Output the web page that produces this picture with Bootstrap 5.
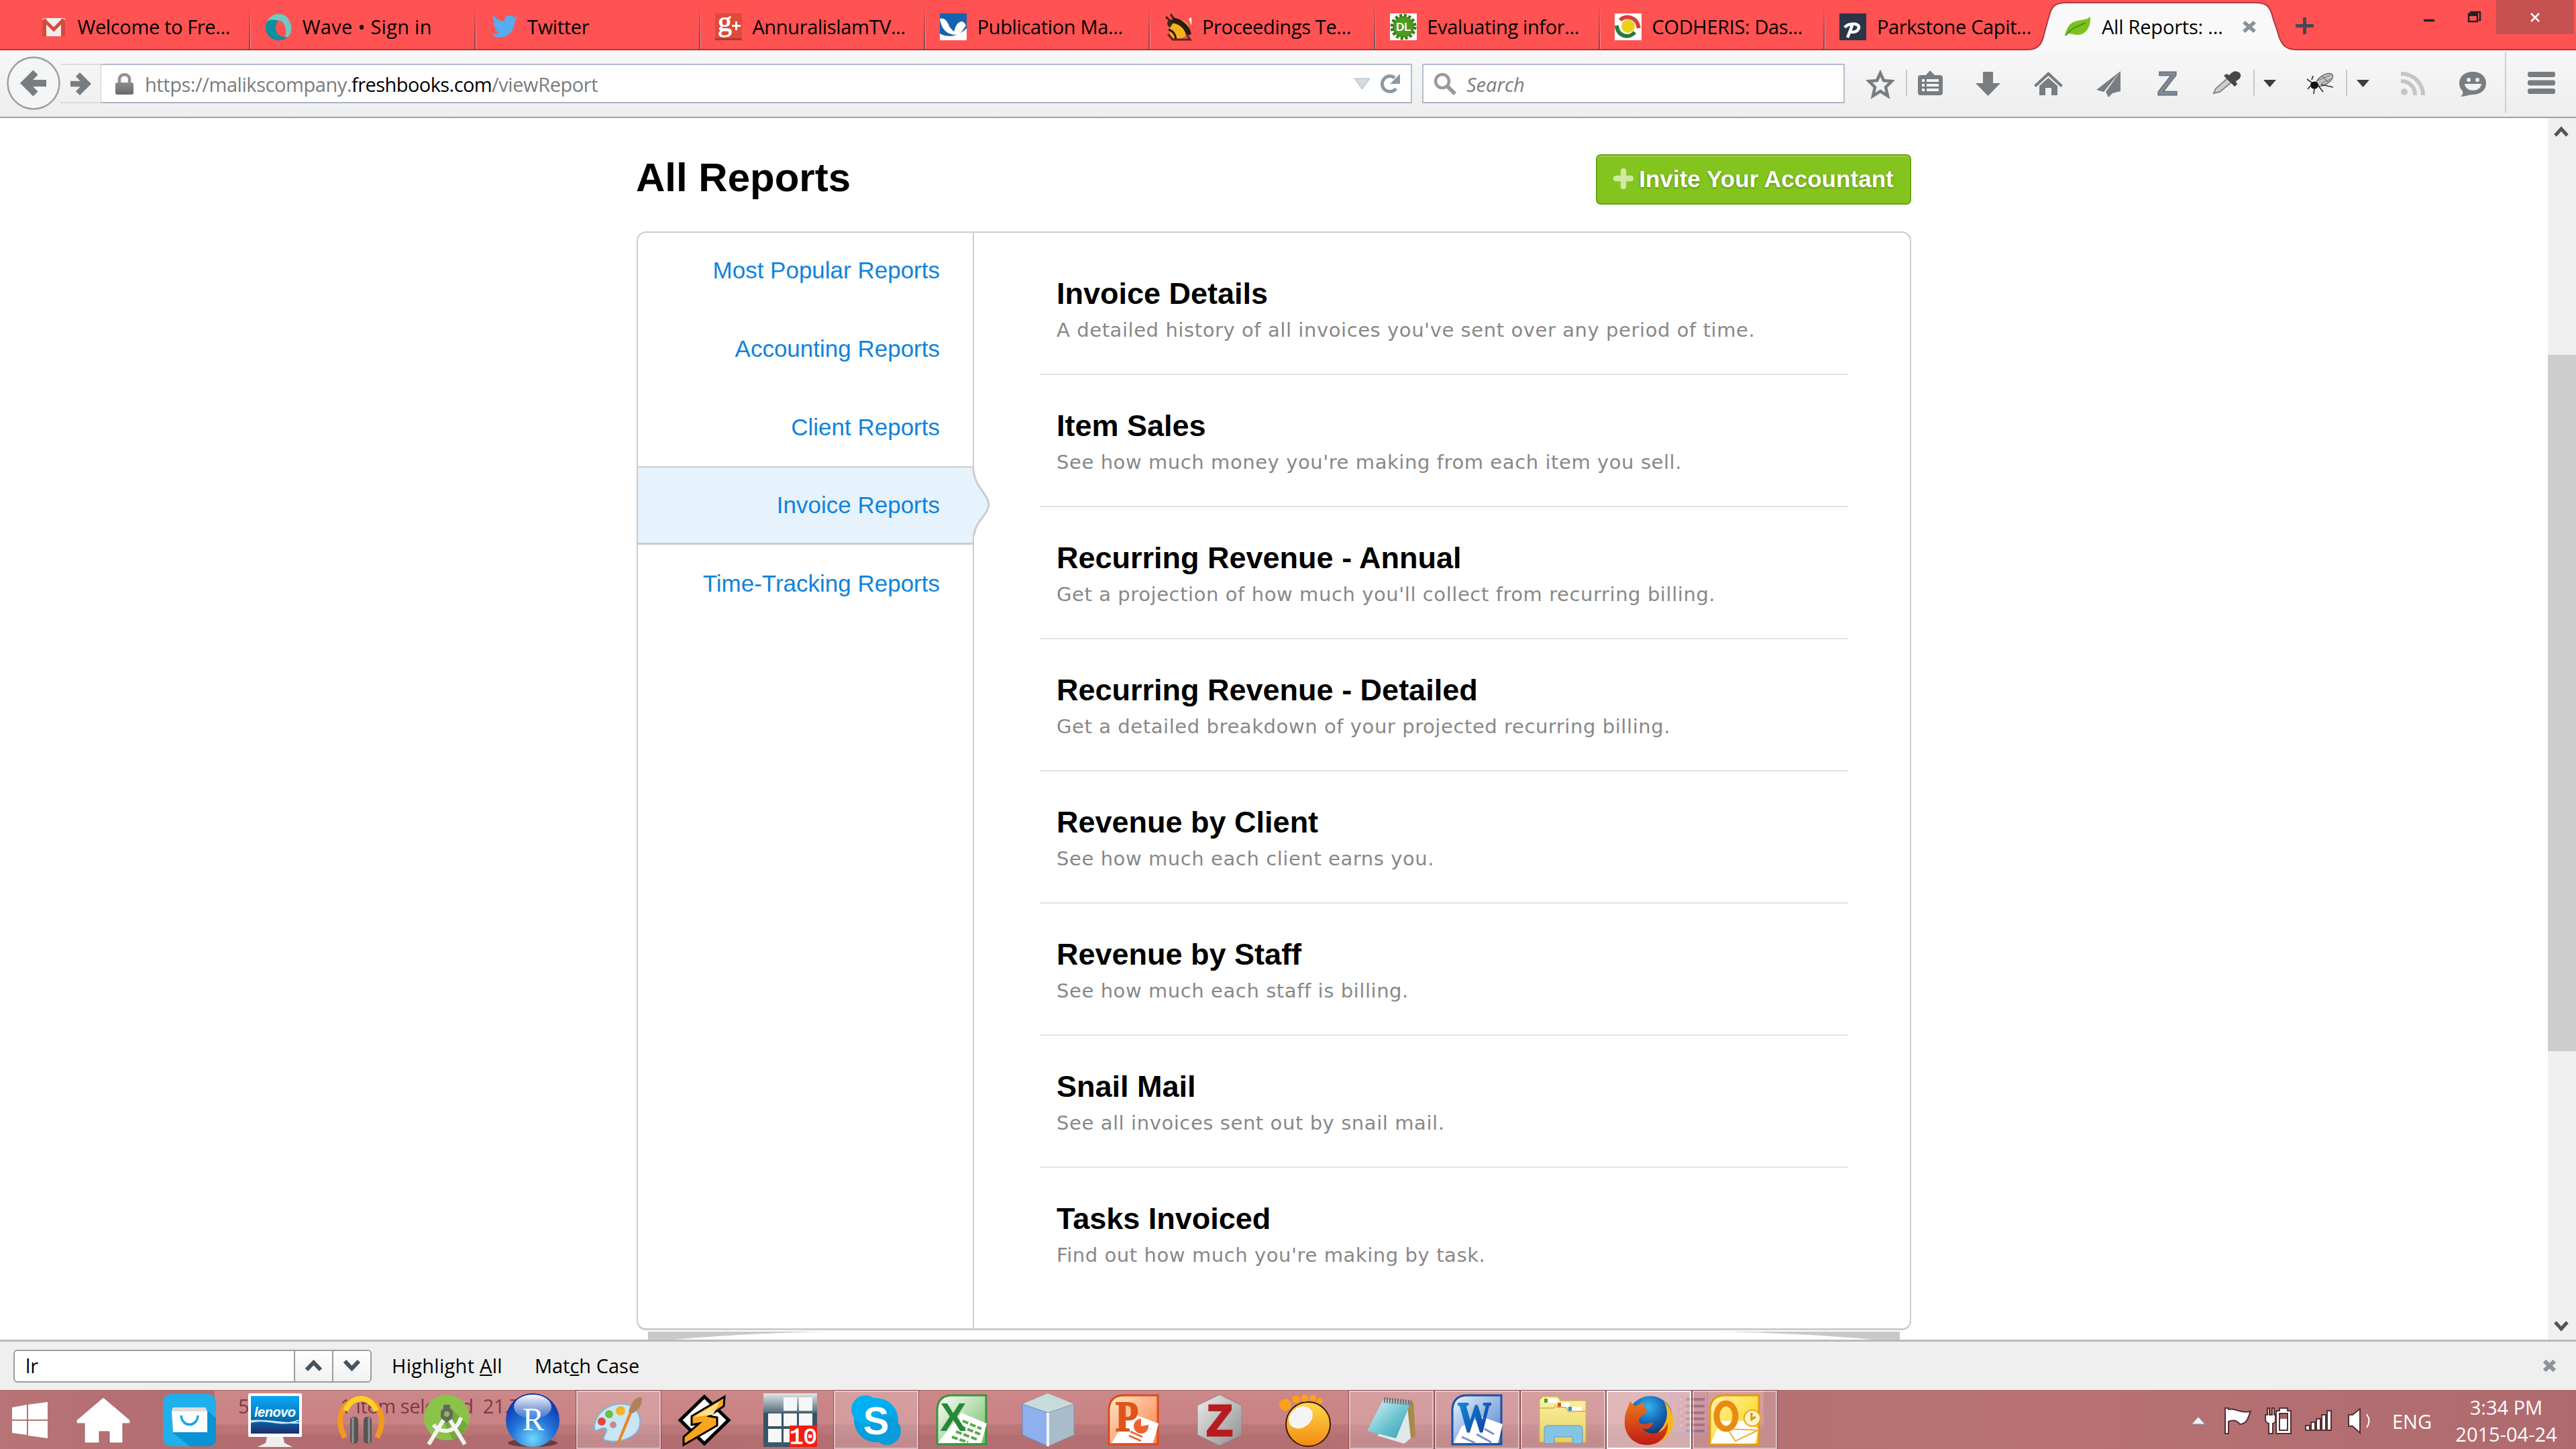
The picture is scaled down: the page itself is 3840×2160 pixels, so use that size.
<!DOCTYPE html>
<html lang="en">
<head>
<meta charset="utf-8">
<title>All Reports: FreshBooks</title>
<link href="https://cdn.jsdelivr.net/npm/bootstrap@5.3.0/dist/css/bootstrap.min.css" rel="stylesheet">
<style>
html,body{width:3840px;height:2160px;overflow:hidden;background:#fff}
body{font-family:"Open Sans","Noto Sans",sans-serif;font-size:29px;line-height:40px;color:#000}
svg{display:block;flex:none;overflow:visible}
svg text{font-family:"Liberation Sans",Arial,sans-serif}
svg text.serif{font-family:"Liberation Serif","Times New Roman",serif}
svg text.mono{font-family:"Liberation Mono",monospace}
/* tab strip */
.tabstrip{height:75px;background:#ff5252;border-bottom:2px solid #a8393e;padding-left:38px;flex:none;letter-spacing:-.36px}
.btab{width:335.3px;height:73px;padding:7px 0 0 22px;gap:15.5px;flex:none;white-space:nowrap;position:relative}
.btab::after{content:"";position:absolute;right:-1px;top:6px;width:3px;height:67px;background:linear-gradient(90deg,#6f4a5a 60%,#ff9a9a 60%);-webkit-mask-image:linear-gradient(transparent,#000);mask-image:linear-gradient(transparent,#000)}
.btab.lasttab::after,.btab.curtab::after{display:none}
.btab.lasttab{width:303px}
.btab.curtab{width:399px;height:77px;padding:7px 0 4px 54px;letter-spacing:-.2px}
.curtab .tabshape{position:absolute;left:0;top:0}
.curtab>*:not(.tabshape){position:relative}
.ls-wide{letter-spacing:.28px}
.winbtn-x{width:116px;height:51px;background:#c75050;margin-right:3px}
/* toolbar */
.toolbar{height:101px;background:linear-gradient(#f7f7f7,#eeeeee);border-bottom:2px solid #a0a0a0;flex:none}
.fwd{width:61px;height:59px;border:2px solid #dcdcdc;border-right:1px solid #c4ccd4;border-left:0;margin-left:90px}
.backc{left:10px;top:9px}
.field{height:59px;background:#fff;border:2px solid #b4bfca;border-bottom-color:#aab6c2}
.field span{margin-top:2px}
.urlf{width:1954px;border-left:0;letter-spacing:-.43px}
.searchf{width:630px;margin-left:15px}
.muted{color:#7b7b7b}
.host{letter-spacing:-.57px}
/* page */
.viewport-area{height:1821px;flex:none;overflow:hidden}
.scrollcol{width:42px;background:#f0f0f0}
.thumb{height:1038px;background:#cdcdcd}
.report-wrap{width:1900px;margin-left:949px;padding-top:54px;font-family:"Liberation Sans",Arial,sans-serif}
.pagehead{height:75px;margin-bottom:40px}
.pagehead h1{font-size:60px;line-height:70px;font-weight:700;margin:0 0 5px -1px}
.invite{width:470px;height:75px;padding:0 0 1px;background:#84c41f;border:2px solid #69a30f;border-radius:7px;color:#fff;font-weight:700;font-size:35px;box-shadow:inset 0 2px 0 #9bd03f;text-shadow:0 1px 3px #4e7d06;line-height:40px;gap:8px;letter-spacing:.05px}
.panelbox{height:1638px;border:2px solid #ccc;border-bottom-width:3px;border-radius:14px;position:relative;z-index:1;background:#fff}
.side{width:501px;border-right:2px solid #ccc;padding:0}
.side a{height:116.5px;font-size:35px;color:#1183dc;text-decoration:none;padding:0 49px 1px 0;white-space:nowrap;position:relative}
.side a.first{height:115.4px;padding-bottom:4px}
.side a.cur{background:#e6f2fc;border-top:2px solid #ccc;border-bottom:3px solid #ccc;padding-bottom:0}
.side a.cur svg{position:absolute;left:499px;top:3px}
.replist{width:1205px;margin-left:98px;padding-top:15px}
.rep{height:197px;border-bottom:2px solid #e3e3e3;padding:49px 0 0 25px;white-space:nowrap}
.rep:last-child{border:0}
.rep h2{font-size:45px;line-height:54px;font-weight:700;margin:0 0 7px}
.rep p{font-family:"DejaVu Sans",Verdana,sans-serif;font-size:29px;line-height:40px;color:#888;margin:0;letter-spacing:.58px}
/* find bar */
.findbar{height:75px;background:#efefef;border-top:3px solid #b9bab9;flex:none;padding-left:20px}
.findgrp{width:534px;height:49px;border:2px solid #9c9c9c;border-radius:6px;background:#fff}
.findgrp .fb{width:57px;border-left:2px solid #9c9c9c;background:linear-gradient(#fff,#f1f1f1)}
.findinput{width:417px;padding-left:16px}
.findopts{gap:48px;margin-left:30px}
/* taskbar */
.taskbar{height:88px;position:relative;flex:none;border-top:1px solid #a56a6c;
background:linear-gradient(90deg,#b77476,#b26c70 8%,#b47073 60%,#b87274 80%,#ae6a6e)}
.glass{position:absolute;left:320px;top:0;width:2309px;height:66px;background:linear-gradient(#cc8788 0,#c98284 50px,#bc7779 51px,#b97376 100%)}
.ghost{position:absolute;left:355px;top:7px;color:#7d3a49;line-height:32px;white-space:pre;gap:136px;letter-spacing:-.4px}
.slot{width:128px;height:87px;flex:none;position:relative}
.slot.open::before{content:"";position:absolute;inset:0 1px 0 1px;border:2px solid rgba(255,255,255,.42);outline:1px solid rgba(110,50,60,.6);background:rgba(255,255,255,.2)}
.slot.now::before{border-color:#fff;background:rgba(255,255,255,.42)}
.slot svg{position:relative}
.ghostlist{position:absolute;left:2490px;top:0;width:56px;height:63px;border:1px solid #8a7aa5;background:rgba(190,120,135,.5)}
.tray{color:#fff}
.clock{width:180px;line-height:40.5px;text-align:center;margin:3px 14px 0 21px}
</style>
<script src="https://cdn.jsdelivr.net/npm/bootstrap@5.3.0/dist/js/bootstrap.bundle.min.js"></script>
</head>
<body class="d-flex flex-column">
<svg width="0" height="0" class="position-absolute">
<defs>
<linearGradient id="gMon" x2="0" y2="1"><stop offset="0" stop-color="#0aa5f5"/><stop offset=".45" stop-color="#0284c9"/><stop offset="1" stop-color="#1c2d6b"/></linearGradient>
<linearGradient id="gGray" x2="0" y2="1"><stop offset="0" stop-color="#8c8c8c"/><stop offset="1" stop-color="#6a6a6a"/></linearGradient>
<radialGradient id="gR" cx=".5" cy=".85" r=".8"><stop offset="0" stop-color="#6fd8fb"/><stop offset=".5" stop-color="#2272d8"/><stop offset="1" stop-color="#0a2fa8"/></radialGradient>
<linearGradient id="gShine" x2="0" y2="1"><stop offset="0" stop-color="#fff"/><stop offset="1" stop-color="#fff" stop-opacity=".1"/></linearGradient>
<linearGradient id="gOr" x2="0" y2="1"><stop offset="0" stop-color="#ffd94a"/><stop offset="1" stop-color="#f28a12"/></linearGradient>
<linearGradient id="gTile" x2="0" y2="1"><stop offset="0" stop-color="#dfe5e8"/><stop offset=".35" stop-color="#5a7180"/><stop offset=".37" stop-color="#345264"/><stop offset="1" stop-color="#395a6c"/></linearGradient>
<linearGradient id="gSky" x2="0" y2="1"><stop offset="0" stop-color="#00b2f2"/><stop offset="1" stop-color="#0799d8"/></linearGradient>
<linearGradient id="gX" x2="1" y2="1"><stop offset="0" stop-color="#fff"/><stop offset="1" stop-color="#6dbb5d"/></linearGradient>
<linearGradient id="gP" x2="1" y2="1"><stop offset="0" stop-color="#fde9c8"/><stop offset="1" stop-color="#ff7a45"/></linearGradient>
<linearGradient id="gW" x2="1" y2="1"><stop offset="0" stop-color="#e8f3fc"/><stop offset="1" stop-color="#4a80cc"/></linearGradient>
<linearGradient id="gWt" x2="1" y2="1"><stop offset="0" stop-color="#1290e0"/><stop offset="1" stop-color="#12359c"/></linearGradient>
<linearGradient id="gO" x2="1" y2="1"><stop offset="0" stop-color="#fff3a8"/><stop offset="1" stop-color="#ffd000"/></linearGradient>
<linearGradient id="gFo" x2="0" y2="1"><stop offset="0" stop-color="#fbf3a8"/><stop offset="1" stop-color="#e9cf5c"/></linearGradient>
<radialGradient id="gGlobe" cx=".45" cy=".25" r=".8"><stop offset="0" stop-color="#35b5ee"/><stop offset=".5" stop-color="#145fae"/><stop offset="1" stop-color="#141a4c"/></radialGradient>
<linearGradient id="gFox" x2="0" y2="1"><stop offset="0" stop-color="#ee7a1c"/><stop offset="1" stop-color="#c01a16"/></linearGradient>
<linearGradient id="gNote" x2="1" y2="1"><stop offset="0" stop-color="#e6f8fa"/><stop offset=".6" stop-color="#63c0cc"/><stop offset="1" stop-color="#3a98a8"/></linearGradient>
<linearGradient id="gHex" x2="1" y2="1"><stop offset="0" stop-color="#eee"/><stop offset="1" stop-color="#8d8d8d"/></linearGradient>
</defs></svg>

<div class="tabstrip d-flex">
 <div class="btab d-flex align-items-center"><svg width="40" height="40" viewBox="0 0 40 40"><rect x="3" y="7" width="34" height="27" rx="3" fill="#eee"/><path d="M3 34V10L9 8V34ZM37 34V10L31 8V34Z" fill="#d64a3c"/><path d="M5 9 20 24 35 9" fill="none" stroke="#d64a3c" stroke-width="5"/></svg><span>Welcome to Fre...</span></div>
 <div class="btab d-flex align-items-center"><svg width="40" height="40" viewBox="0 0 40 40"><path d="M3 12C10-2 30-4 37 12C43 26 36 37 30 36C34 24 29 10 19 10C10 10 6 16 3 12Z" fill="#6fc9c5"/><path d="M2 14C-3 28 8 42 24 40C32 39 34 35 31 35C18 36 12 24 19 10C10 9 5 9 2 14Z" fill="#0c8f9f"/></svg><span class="ls-wide">Wave • Sign in</span></div>
 <div class="btab d-flex align-items-center"><svg width="40" height="40" viewBox="0 0 40 40"><path d="M2 31C8 32 12 29 13 28C8 27 7 23 7 22L10 22C4 19 4 14 4 13L7 14C2 9 4 4 5 3C10 9 16 12 21 12C20 5 25 3 29 3C32 3 34 5 35 6L40 4C39 7 38 8 36 9L40 8C39 10 38 11 36 13C36 28 24 36 14 36C9 36 5 34 2 31Z" fill="#55acee"/></svg><span>Twitter</span></div>
 <div class="btab d-flex align-items-center"><svg width="40" height="40" viewBox="0 0 40 40"><rect width="40" height="40" fill="#dd4b39"/><rect y="37" width="40" height="3" fill="#b03a2c"/><text class="serif" x="4" y="26" font-size="42" fill="#fff" stroke="#fff">g</text><path d="M25 18.500H38M31.500 12V25" stroke="#fff" stroke-width="3"/></svg><span>AnnuralislamTV...</span></div>
 <div class="btab d-flex align-items-center"><svg width="40" height="40" viewBox="0 0 40 40"><rect width="40" height="40" fill="#1562b0"/><path d="M0 8C8 6 11 12 15 21L21 27C23 22 24 14 32 12C36 12 38 16 39 18L32 28C28 32 22 33 14 30C6 26 2 20 0 8ZM0 30C10 36 26 36 40 22V40H0Z" fill="#fff"/></svg><span>Publication Ma...</span></div>
 <div class="btab d-flex align-items-center"><svg width="40" height="40" viewBox="0 0 40 40"><path d="M9 1 17 13M2 5 12 15" stroke="#402020" stroke-width="3"/><circle cx="10" cy="15" r="6" fill="#3a2a18"/><ellipse cx="22" cy="24" rx="15" ry="13" transform="rotate(-40 22 24)" fill="#f5b21a"/><path d="M12 10C24 12 34 20 36 32" fill="none" stroke="#2a1c10" stroke-width="8"/><path d="M6 24C12 26 16 30 17 38" fill="none" stroke="#221a10" stroke-width="3"/><path d="M36 8 40 6V18Z" fill="#fff"/><path d="M5 31 12 39H38L34 33" fill="none" stroke="#5b2a18" stroke-width="3"/></svg><span>Proceedings Te...</span></div>
 <div class="btab d-flex align-items-center"><svg width="40" height="40" viewBox="0 0 40 40"><rect width="40" height="40" fill="#fff"/><circle cx="20" cy="20" r="16" fill="#4d9a22"/><circle cx="20" cy="20" r="17" fill="none" stroke="#3b7d1a" stroke-width="5" stroke-dasharray="4 2.7"/><text x="20" y="26" text-anchor="middle" font-size="17" font-weight="700" fill="#fff">DL</text></svg><span>Evaluating infor...</span></div>
 <div class="btab d-flex align-items-center"><svg width="40" height="40" viewBox="0 0 40 40"><rect width="40" height="40" fill="#fff"/><path d="M8 10C16 2 33 4 36 22" fill="none" stroke="#dc3b3b" stroke-width="6"/><path d="M3 18C4 35 22 38 30 28" fill="none" stroke="#2b7a3d" stroke-width="6"/><circle cx="20" cy="19" r="10" fill="#e9d21c"/></svg><span>CODHERIS: Das...</span></div>
 <div class="btab lasttab d-flex align-items-center"><svg width="40" height="40" viewBox="0 0 40 40"><rect width="40" height="40" fill="#2c3548"/><path d="M12 36 19 18M8 21C12 15 29 13 29 21C28 27 22 29 16 27" fill="none" stroke="#fff" stroke-width="4.500"/></svg><span>Parkstone Capit...</span></div>
 <div class="btab curtab d-flex align-items-center">
  <svg class="tabshape" width="399" height="77" viewBox="0 0 399 77"><path d="M0 74C18 74 22 62 25 47L31 26C35 9 40 4 58 4H338C356 4 361 9 365 26L372 47C376 62 381 74 399 74V77H0Z" fill="#f9f9f9"/><path d="M0 74C18 74 22 62 25 47L31 26C35 9 40 4 58 4H338C356 4 361 9 365 26L372 47C376 62 381 74 399 74" fill="none" stroke="#b0393f" stroke-width="2"/></svg>
  <svg width="40" height="30" viewBox="0 0 40 30"><path d="M1 29C3 20 6 10 16 7C26 4 34 5 39 0C40 14 33 27 20 27C12 27 7 22 1 29Z" fill="#7cc11d"/><path d="M2 28C10 17 20 14 32 9" fill="none" stroke="#4f9410" stroke-width="2"/></svg>
  <span>All Reports: ...</span>
  <svg style="margin-left:13px" width="22" height="20" viewBox="0 0 22 20"><path d="M3 3 19 17M19 3 3 17" stroke="#87919b" stroke-width="5.5"/></svg>
 </div>
 <svg style="margin-top:26px" width="27" height="25" viewBox="0 0 27 25"><path d="M0 12.5H27M13.5 0V25" stroke="#45494d" stroke-width="5"/></svg>
 <div class="ms-auto d-flex">
  <svg width="108" height="51" viewBox="0 0 108 51"><path d="M0 30.5H16" stroke="#222" stroke-width="3.5"/><path d="M67 20.5H80V32H67ZM70 19V18H84V30H82" fill="none" stroke="#222" stroke-width="2.4"/><path d="M66 22H81" stroke="#222" stroke-width="4"/></svg>
  <div class="winbtn-x d-flex align-items-center justify-content-center"><svg width="12" height="12" viewBox="0 0 12 12"><path d="M0 0 12 12M12 0 0 12" stroke="#fff" stroke-width="2.5"/></svg></div>
 </div>
</div>

<div class="toolbar d-flex align-items-center position-relative">
 <div class="fwd d-flex align-items-center justify-content-center"><svg width="32" height="36" viewBox="0 0 32 36"><path d="M1 18H24M12 4 26 18 12 32" fill="none" stroke="#787d82" stroke-width="8.5"/></svg></div>
 <svg class="position-absolute backc" width="80" height="80" viewBox="0 0 80 80"><circle cx="40" cy="40" r="38.5" fill="#f4f5f5" stroke="#9c9fa0" stroke-width="2.5"/><path d="M59 40H30M43 24 27 40 43 56" fill="none" stroke="#787d82" stroke-width="10"/></svg>
 <div class="field urlf d-flex align-items-center">
  <svg style="margin-left:21px;margin-right:17px" width="27" height="32" viewBox="0 0 27 32"><path d="M6 16V9C6 0 21 0 21 9V16" fill="none" stroke="#909090" stroke-width="4.5"/><rect y="14" width="27" height="18" rx="3" fill="url(#gGray)"/></svg>
  <span class="muted">https://malikscompany.</span><span class="host">freshbooks.com</span><span class="muted">/viewReport</span>
  <svg class="ms-auto me-3" width="25" height="18" viewBox="0 0 25 18"><path d="M1 1H24L12.500 17Z" fill="#d3dae0" stroke="#aeb8c2"/></svg>
  <svg style="margin-right:16px" width="28" height="30" viewBox="0 0 28 30"><path d="M22 22A11.500 11.500 0 1 1 20 6" fill="none" stroke="#8d98a4" stroke-width="5"/><path d="M28 0V15H13Z" fill="#8d98a4"/></svg>
 </div>
 <div class="field searchf d-flex align-items-center">
  <svg style="margin:0 15px" width="34" height="34" viewBox="0 0 34 34"><circle cx="13" cy="13" r="10" fill="none" stroke="#999" stroke-width="4.500"/><path d="M20 20 32 32" stroke="#999" stroke-width="6"/></svg>
  <span class="fst-italic muted">Search</span>
 </div>
 <svg width="1090" height="99" viewBox="2750 75 1090 99">
  <g fill="#787d82">
  <path d="M2803 109 2808 120 2820 121 2811 130 2814 143 2803 136 2792 143 2795 130 2786 121 2798 120Z" fill="none" stroke="#787d82" stroke-width="4.500"/>
  <rect x="2841" y="104" width="2" height="40" fill="#c6c9cc"/>
  <path d="M2863 112H2871L2877 105 2884 112H2892Q2896 112 2896 116V138Q2896 142 2892 142H2863Q2859 142 2859 138V116Q2859 112 2863 112Z"/><path d="M2865 120H2869M2872 120H2890M2865 127H2869M2872 127H2890M2865 134H2869M2872 134H2890" stroke="#f2f2f2" stroke-width="4"/>
  <path d="M2956 107H2971V124H2982L2963.500 143 2945 124H2956Z"/>
  <path d="M3053.500 107 3075 127 3072 130 3053.500 113 3035 130 3032 127ZM3053.500 116 3067 128V142H3058V131H3049V142H3040V128Z"/>
  <path d="M3161 106 3125 134 3136 137ZM3161 106 3139 137 3143 145 3149 139 3161 136Z"/>
  <text x="3231" y="142" text-anchor="middle" font-size="50" font-weight="700" fill="#7f8a99" stroke="#555c66" textLength="31" lengthAdjust="spacingAndGlyphs">Z</text>
  <path d="M3300 139 3303 132 3320 117 3326 123 3309 137Z" fill="#ccc" stroke="#888" stroke-width="2"/><path d="M3315 113 3319 110 3323 112C3328 106 3333 105 3338 108C3343 113 3339 118 3333 121L3335 126 3331 129Z" fill="#484848"/>
  <rect x="3359" y="104" width="2" height="40" fill="#c6c9cc"/><path d="M3374 119H3393L3383.500 130Z" fill="#3d3d3d"/>
  <ellipse cx="3465" cy="119" rx="14" ry="7" transform="rotate(-32 3465 119)" fill="#c4c4c4" stroke="#666" stroke-width="1.500"/><path d="M3455 120 3474 112M3460 124 3477 117M3461 113 3470 122" stroke="#777" stroke-width="1.200"/><ellipse cx="3450" cy="127" rx="6" ry="5.500" fill="#111"/><path d="M3446 123 3439 118M3445 127 3440 133M3450 132 3449 140M3456 128 3463 137M3460 126 3478 130M3446 119 3448 113" stroke="#333" stroke-width="1.700" fill="none"/>
  <rect x="3497" y="104" width="2" height="40" fill="#c6c9cc"/><path d="M3513 119H3532L3522.500 130Z" fill="#3d3d3d"/>
  <g stroke="#c3c5c7" stroke-width="6" fill="none"><path d="M3579 121A20 20 0 0 1 3600 142M3579 110A32 32 0 0 1 3612 142"/></g><circle cx="3584" cy="137" r="5" fill="#c3c5c7"/>
  <path d="M3686 107C3698 107 3706 114 3706 124C3706 134 3698 141 3686 141C3680 141 3675 144 3668 144C3671 141 3672 139 3671 136C3668 133 3666 129 3666 124C3666 114 3674 107 3686 107Z"/><circle cx="3680" cy="119" r="3" fill="#f2f2f2"/><circle cx="3693" cy="119" r="3" fill="#f2f2f2"/><path d="M3674 125H3699C3698 138 3675 138 3674 125Z" fill="#f2f2f2"/>
  <rect x="3734" y="78" width="2" height="90" fill="#cdcfd1"/>
  <rect x="3768" y="107" width="41" height="8" rx="3"/><rect x="3768" y="119.500" width="41" height="8" rx="3"/><rect x="3768" y="132" width="41" height="8" rx="3"/>
  </g>
 </svg>
</div>

<div class="viewport-area d-flex">
 <div class="flex-grow-1">
  <main class="report-wrap">
   <div class="pagehead d-flex justify-content-between align-items-center">
    <h1>All Reports</h1>
    <button class="btn invite d-flex align-items-center justify-content-center"><svg width="30" height="30" viewBox="0 0 30 30"><path d="M4 14H26M15 3V26" stroke="#cdeaa0" stroke-width="8.500" stroke-linecap="round"/></svg>Invite Your Accountant</button>
   </div>
   <div class="panelbox d-flex">
    <nav class="side d-flex flex-column">
     <a href="#" class="first d-flex align-items-center justify-content-end">Most Popular Reports</a>
     <a href="#" class="d-flex align-items-center justify-content-end">Accounting Reports</a>
     <a href="#" class="d-flex align-items-center justify-content-end">Client Reports</a>
     <a href="#" class="cur d-flex align-items-center justify-content-end">Invoice Reports<svg width="26" height="100" viewBox="0 0 26 100"><path d="M0 2C2 26 24 38 24 52C24 66 2 78 2 98H0Z" fill="#e6f2fc"/><path d="M1 0C3 26 24 38 24 52C24 66 3 78 2 98" fill="none" stroke="#ccc" stroke-width="3"/></svg></a>
     <a href="#" class="d-flex align-items-center justify-content-end">Time-Tracking Reports</a>
    </nav>
    <div class="replist">
     <div class="rep"><h2>Invoice Details</h2><p>A detailed history of all invoices you've sent over any period of time.</p></div>
     <div class="rep"><h2>Item Sales</h2><p>See how much money you're making from each item you sell.</p></div>
     <div class="rep"><h2>Recurring Revenue - Annual</h2><p>Get a projection of how much you'll collect from recurring billing.</p></div>
     <div class="rep"><h2>Recurring Revenue - Detailed</h2><p>Get a detailed breakdown of your projected recurring billing.</p></div>
     <div class="rep"><h2>Revenue by Client</h2><p>See how much each client earns you.</p></div>
     <div class="rep"><h2>Revenue by Staff</h2><p>See how much each staff is billing.</p></div>
     <div class="rep"><h2>Snail Mail</h2><p>See all invoices sent out by snail mail.</p></div>
     <div class="rep"><h2>Tasks Invoiced</h2><p>Find out how much you're making by task.</p></div>
    </div>
   </div>
   <div class="d-flex justify-content-between" style="padding:2px 17px 0"><svg width="275" height="12" viewBox="0 0 275 12"><path d="M0 0H275C190 1 90 7 40 12H0Z" fill="#c9c9c9"/></svg><svg width="275" height="12" viewBox="0 0 275 12"><path d="M275 0H0C85 1 185 7 235 12H275Z" fill="#c9c9c9"/></svg></div>
  </main>
 </div>
 <div class="scrollcol d-flex flex-column">
  <svg style="margin:12px 0 0 10px" width="20" height="16" viewBox="0 0 20 16"><path d="M1 14 10 4 19 14" fill="none" stroke="#555" stroke-width="5"/></svg>
  <div class="thumb" style="margin-top:325px"></div>
  <svg class="mt-auto" style="margin:0 0 12px 10px" width="20" height="16" viewBox="0 0 20 16"><path d="M1 2 10 12 19 2" fill="none" stroke="#555" stroke-width="5"/></svg>
 </div>
</div>

<div class="findbar d-flex align-items-center">
 <div class="findgrp d-flex overflow-hidden">
  <div class="findinput d-flex align-items-center">lr</div>
  <div class="fb d-flex align-items-center justify-content-center"><svg width="27" height="17" viewBox="0 0 27 17"><path d="M3 14 13.500 3 24 14" fill="none" stroke="#46525e" stroke-width="6"/></svg></div>
  <div class="fb d-flex align-items-center justify-content-center"><svg width="27" height="17" viewBox="0 0 27 17"><path d="M3 1 13.500 12 24 1" fill="none" stroke="#46525e" stroke-width="6"/></svg></div>
 </div>
 <div class="findopts d-flex"><span class="ls-wide">Highlight <u>A</u>ll</span><span>Mat<u>c</u>h Case</span></div>
 <svg class="ms-auto" style="margin-right:29px" width="21" height="20" viewBox="0 0 21 20"><path d="M3 3 18 17M18 3 3 17" stroke="#8b949d" stroke-width="6"/></svg>
</div>

<div class="taskbar d-flex align-items-center">
 <div class="glass"></div>
 <div class="ghost d-flex"><span>5</span><span>1 item selected  21.7</span></div>
 <div class="ghostlist"><svg width="56" height="63" viewBox="0 0 56 63"><path d="M22 12H50M22 22H50M22 32H50M22 41H50M22 50H50M22 59H50" stroke="#8c5263" stroke-width="4"/><path d="M11 8H18V15H11ZM11 18H18V25H11ZM11 28H18V35H11ZM11 38H18V45H11ZM11 47H18V54H11Z" fill="#c98c94" stroke="#9c6472"/></svg></div>
 <svg style="margin:0 19px 0 18px" width="53" height="54" viewBox="0 0 53 54"><path d="M0 8 22 4V26H0ZM24 3.700 53 0V26H24ZM0 28H22V49L0 46ZM24 28H53V54L24 50Z" fill="#fff"/></svg>
 <div class="slot d-flex align-items-center justify-content-center"><svg width="80" height="68" viewBox="0 0 80 68"><path d="M40 0 80 34V39H69V68H49V51H34V68H12V39H0V34Z" fill="#fff" stroke="#a06068"/></svg></div>
 <div class="slot d-flex align-items-center justify-content-center"><svg width="79" height="78" viewBox="0 0 79 78"><rect width="79" height="78" rx="13" fill="#1fb0ec"/><path d="M15 58 40 78H66Q79 78 79 65V36L63 22Z" fill="#0a93d4"/><path d="M15 20 63 20 66 26V57H15L13 26Z" fill="#fff"/><path d="M13 26 16 20H63L66 26Z" fill="#ddd"/><path d="M27 32C28 50 51 50 52 32" fill="none" stroke="#18a5e6" stroke-width="3.500"/></svg></div>
 <div class="slot d-flex align-items-center justify-content-center"><svg width="80" height="80" viewBox="0 0 80 80"><rect width="80" height="65" rx="2" fill="#fff"/><rect x="4" y="4" width="72" height="56" fill="url(#gMon)"/><text x="40" y="35" text-anchor="middle" font-size="20" font-weight="700" font-style="italic" fill="#fff" textLength="62">lenovo</text><path d="M4 43C30 36 45 52 76 40M4 41C28 38 50 46 76 44" fill="none" stroke="#bfe5f8" stroke-width="2"/><path d="M28 65H52L54 74 66 80H14L26 74Z" fill="#eee"/></svg></div>
 <div class="slot d-flex align-items-center justify-content-center"><svg width="66" height="72" viewBox="0 0 66 72"><path d="M9 62C-8 30 10 4 33 4S74 30 57 62" fill="none" stroke="#f39a1e" stroke-width="8"/><path d="M10 22C16 8 26 4 33 4S50 8 56 22" fill="none" stroke="#ffd028" stroke-width="8"/><rect x="17" y="31" width="12" height="40" rx="5" fill="#555"/><rect x="37" y="31" width="12" height="40" rx="5" fill="#555"/><path d="M21 32V70M45 32V70" stroke="#929292" stroke-width="3"/></svg></div>
 <div class="slot d-flex align-items-center justify-content-center"><svg width="70" height="76" viewBox="0 0 70 76"><ellipse cx="35" cy="34" rx="34" ry="34" fill="#8bc34a"/><path d="M35 14 66 45A34 34 0 0 1 44 67L30 40Z" fill="#75aa3a"/><path d="M30 15H40V20L44 25V34L35 42 26 34V25L30 20Z" fill="#666"/><circle cx="35" cy="29" r="4" fill="#8bc34a"/><path d="M30 38 8 74M40 38 62 74" stroke="#f3f3f3" stroke-width="6"/><path d="M15 45C28 60 50 56 56 34" fill="none" stroke="#f3f3f3" stroke-width="6"/></svg></div>
 <div class="slot d-flex align-items-center justify-content-center"><svg width="80" height="80" viewBox="0 0 80 80"><ellipse cx="40" cy="74" rx="37" ry="6" fill="#6b3b3e"/><circle cx="40" cy="40" r="40" fill="url(#gR)"/><ellipse cx="40" cy="20" rx="28" ry="18" fill="url(#gShine)"/><text class="serif" x="41" y="55" text-anchor="middle" font-size="48" fill="#fff">R</text></svg></div>
 <div class="slot open d-flex align-items-center justify-content-center"><svg width="72" height="72" viewBox="0 0 72 72"><path d="M36 12C58 10 70 24 68 42C66 60 40 72 16 66C8 62 24 52 16 48C8 46 0 60 0 44C2 28 16 14 36 12Z" fill="#c9e6f4" stroke="#7fb5d2" stroke-width="2"/><circle cx="28" cy="43" r="5" fill="#c28b8d"/><circle cx="11" cy="38" r="6" fill="#e2453a"/><circle cx="22" cy="27" r="6" fill="#6cbf3c"/><circle cx="39" cy="22" r="7" fill="#f3b321"/><path d="M33 71 52 24 56 26 37 72Z" fill="#ef8522"/><path d="M51 24C54 10 62 0 70 2C74 10 66 22 56 26Z" fill="#ad8458"/></svg></div>
 <div class="slot d-flex align-items-center justify-content-center"><svg width="78" height="76" viewBox="0 0 78 76"><path d="M39 3 75 38 39 73 3 38Z" fill="#fff" stroke="#000" stroke-width="5"/><path d="M69 3 20 32V45L31 43 8 63V75L58 46V34L46 32 68 17Z" fill="#f9a51e" stroke="#000" stroke-width="3"/><path d="M62 10 24 33 52 30Z" fill="#ffdf8a"/></svg></div>
 <div class="slot d-flex align-items-center justify-content-center"><svg width="80" height="80" viewBox="0 0 80 80"><rect width="80" height="80" fill="url(#gTile)"/><path d="M30 6H50V26H30ZM53 6H73V26H53ZM7 30H27V49H7ZM30 30H50V49H30ZM53 30H73V49H53ZM7 53H27V73H7ZM30 53H40V73H30Z" fill="#f7f7f7"/><rect x="39" y="48" width="41" height="32" fill="#f51d10"/><text class="mono" x="59.500" y="75" text-anchor="middle" font-size="34" fill="#fff" stroke="#fff">10</text></svg></div>
 <div class="slot open d-flex align-items-center justify-content-center"><svg width="76" height="74" viewBox="0 0 76 74"><circle cx="38" cy="37" r="33" fill="url(#gSky)"/><circle cx="22" cy="21" r="21" fill="#00b0f0"/><circle cx="54" cy="53" r="21" fill="#0a9cdb"/><text x="38" y="58" text-anchor="middle" font-size="58" font-weight="700" fill="#fff">S</text></svg></div>
 <div class="slot d-flex align-items-center justify-content-center"><svg width="78" height="77" viewBox="0 0 78 77"><path d="M2 75V22Q4 2 24 2H75V75Z" fill="url(#gX)" stroke="#37963c" stroke-width="3"/><path d="M38 28 76 44 68 73H3Z" fill="#fff"/><path d="M40 40 68 52M36 48 66 60M30 56 62 68M24 64 48 72" stroke="#55a94a" stroke-width="4" stroke-dasharray="9 3"/><text x="26" y="55" text-anchor="middle" font-size="59" font-weight="700" fill="#26893a">X</text></svg></div>
 <div class="slot d-flex align-items-center justify-content-center"><svg width="77" height="79" viewBox="0 0 77 79"><path d="M38 0 77 16 38 29 0 16Z" fill="#c5dcda"/><path d="M0 16 38 29V79L0 62Z" fill="#8fb0ee" stroke="#6688c0"/><path d="M77 16 38 29V79L77 62Z" fill="#a9bccb" stroke="#8297aa"/><path d="M38 29V79" stroke="#eef6ff" stroke-width="4"/></svg></div>
 <div class="slot d-flex align-items-center justify-content-center"><svg width="78" height="77" viewBox="0 0 78 77"><path d="M2 75V22Q4 2 24 2H75V75Z" fill="url(#gP)" stroke="#dd4a1c" stroke-width="3"/><path d="M34 28 76 44 68 73H6Z" fill="#fff"/><circle cx="50" cy="48" r="11" fill="#ef6030"/><path d="M50 48V36A12 12 0 0 1 61 46Z" fill="#fff"/><path d="M34 56 52 64M32 62 50 70" stroke="#ef6030" stroke-width="3"/><text class="serif" x="29" y="55" text-anchor="middle" font-size="63" font-weight="700" fill="#e0541a" stroke="#e0541a" stroke-width="2" textLength="34" lengthAdjust="spacingAndGlyphs">P</text></svg></div>
 <div class="slot d-flex align-items-center justify-content-center"><svg width="68" height="76" viewBox="0 0 68 76"><path d="M34 0 67 16V60L34 76 1 60V16Z" fill="url(#gHex)" stroke="#8a8a8a"/><text x="34" y="61" text-anchor="middle" font-size="64" font-weight="700" fill="#b71d20" stroke="#b71d20" stroke-width="3">Z</text></svg></div>
 <div class="slot d-flex align-items-center justify-content-center"><svg width="78" height="77" viewBox="0 0 78 77"><circle cx="43" cy="45" r="33" fill="url(#gOr)" stroke="#3a1a05" stroke-width="2"/><circle cx="9" cy="16" r="9" fill="#f9a21c"/><circle cx="25" cy="8" r="6" fill="#f9a21c"/><circle cx="38" cy="6" r="5.500" fill="#f9a21c"/><circle cx="50" cy="6" r="5" fill="#f9a21c"/><circle cx="60" cy="10" r="4.500" fill="#f9a21c"/><ellipse cx="32" cy="35" rx="19" ry="15" transform="rotate(-35 32 35)" fill="#f4f4f4"/></svg></div>
 <div class="slot open d-flex align-items-center justify-content-center"><svg width="74" height="70" viewBox="0 0 74 70"><path d="M62 6 70 8 73 60 60 64Z" fill="#a88b4a"/><path d="M16 58 60 6 66 62 56 70Z" fill="#dfe9ea"/><path d="M25 4 66 9 44 62 1 51Z" fill="url(#gNote)"/><path d="M26 5 67 9" stroke="#6c6c6c" stroke-width="8" stroke-dasharray="2 2"/></svg></div>
 <div class="slot open d-flex align-items-center justify-content-center"><svg width="78" height="77" viewBox="0 0 78 77"><path d="M2 75V22Q4 2 24 2H75V75Z" fill="url(#gW)" stroke="#1f4f9f" stroke-width="3"/><path d="M46 34 77 45 70 73H4L16 48Z" fill="#fff"/><path d="M38 60 60 72M50 52 64 60M16 64 36 73" stroke="#6f93cf" stroke-width="3"/><text class="serif" x="35" y="56" text-anchor="middle" font-size="64" font-weight="700" fill="url(#gWt)" stroke="url(#gWt)" stroke-width="2" textLength="50" lengthAdjust="spacingAndGlyphs">W</text></svg></div>
 <div class="slot open d-flex align-items-center justify-content-center"><svg width="72" height="70" viewBox="0 0 72 70"><path d="M1 68V5L6 0H28L32 6H70V68Z" fill="url(#gFo)" stroke="#d0b549"/><path d="M8 3H28V9H8ZM28 9H46V15H28ZM44 15H64V21H44Z" fill="#fff"/><path d="M8 3H13V9H8Z" fill="#3fa535"/><path d="M28 9H33V15H28Z" fill="#e0541a"/><path d="M44 15H49V21H44Z" fill="#2e8fd0"/><path d="M1 17H22L26 12M26 16H40L44 22H70" fill="none" stroke="#d8bd55" stroke-width="2"/><path d="M8 70V48Q8 43 13 43H60Q65 43 65 48V70H50V60H23V70Z" fill="#84c4e4" stroke="#5a9dc4"/></svg></div>
 <div class="slot open now d-flex align-items-center justify-content-center"><svg width="76" height="74" viewBox="0 0 76 74"><ellipse cx="40" cy="33" rx="33" ry="32" fill="url(#gGlobe)"/><path d="M60 8C78 24 80 52 60 66C48 74 40 74 36 74L58 48C68 34 66 20 60 8Z" fill="#fbb81a"/><path d="M10 8C12 12 14 14 18 16C22 14 26 14 30 10C30 16 32 20 36 22C34 28 26 30 24 34C20 42 28 46 44 40C44 48 36 52 28 50C40 62 60 58 66 40C68 60 54 74 36 74C14 74 0 58 2 36C2 24 8 18 10 8Z" fill="url(#gFox)"/></svg></div>
 <div class="slot open d-flex align-items-center justify-content-center"><svg width="78" height="77" viewBox="0 0 78 77"><path d="M2 75V22Q4 2 24 2H75V75Z" fill="url(#gO)" stroke="#e39a12" stroke-width="3"/><path d="M3 74 18 40 52 40 74 52 70 74Z" fill="#fff"/><path d="M28 52 40 70 74 54Z" fill="#fff" stroke="#eeb23c" stroke-width="2"/><ellipse cx="26" cy="33" rx="14" ry="19" fill="none" stroke="#ea8a12" stroke-width="9"/><circle cx="65" cy="36" r="12" fill="#fff6c8" stroke="#e9a61c" stroke-width="2"/><path d="M64 28V38L70 34" fill="none" stroke="#e08a10" stroke-width="3"/></svg></div>
 <div class="tray ms-auto d-flex align-items-center">
  <svg width="270" height="50" viewBox="3264 2092 270 50"><path d="M3266 2123 3276 2112 3286 2123Z" fill="#f0f2f4" stroke="#8090a0"/>
  <g stroke="#553034" stroke-width="2" fill="#fff"><path d="M3316 2099H3321V2101C3332 2098 3338 2108 3354 2104C3350 2112 3350 2122 3338 2123C3334 2118 3328 2116 3321 2119V2137H3316Z"/>
  <path d="M3379 2099H3382V2109H3386V2099H3389V2109H3391V2118Q3390 2122 3387 2122V2137H3381V2122Q3377 2121 3376 2117V2109H3379Z"/><path d="M3392 2103H3397V2099H3409V2103H3414V2137H3392Z"/><rect x="3397" y="2107" width="12" height="25" fill="#a46166"/><rect x="3398" y="2115" width="10" height="16" stroke="none"/>
  <path d="M3436 2125H3442V2132H3436ZM3444 2120H3450V2132H3444ZM3452 2115H3458V2132H3452ZM3460 2109H3466V2132H3460ZM3468 2103H3474V2132H3468Z"/>
  <path d="M3500 2109H3506L3517 2100V2136L3506 2126H3500Z"/></g><path d="M3527 2108Q3534 2118 3527 2128" fill="none" stroke="#fff" stroke-width="2"/></svg>
  <span style="margin:4px 0 0 31px">ENG</span>
  <div class="clock"><span>3:34 PM</span><br><span>2015-04-24</span></div>
 </div>
</div>
</body>
</html>
